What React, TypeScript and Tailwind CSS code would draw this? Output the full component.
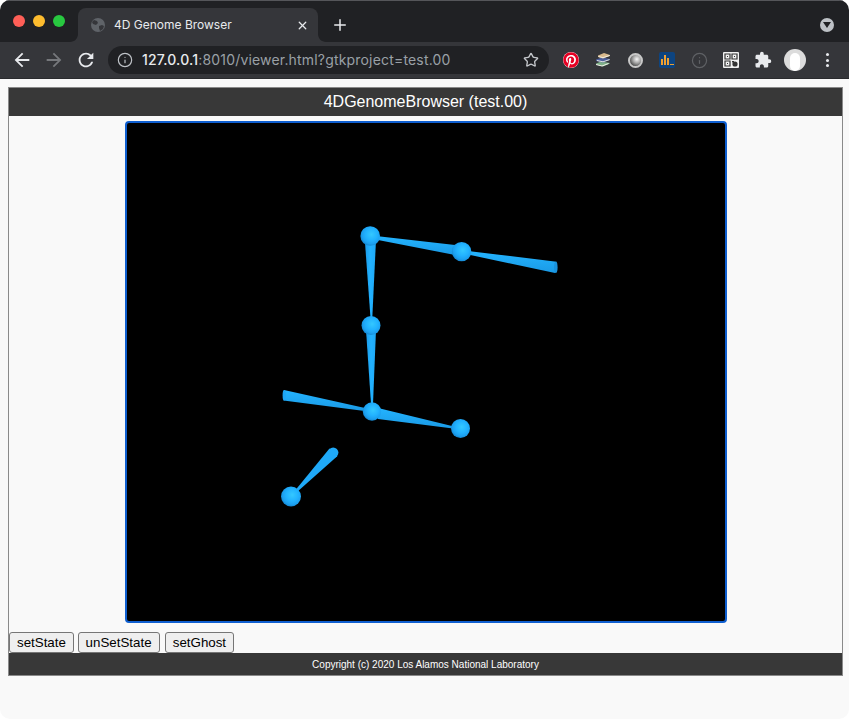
import React from 'react';
import { FaPinterest } from 'react-icons/fa';
import { MdArrowBack, MdArrowForward, MdRefresh, MdExtension } from 'react-icons/md';
import { Info, Star, X, Plus } from 'lucide-react';

const uiFont = "font-['Inter','Liberation_Sans',sans-serif]";

const Ball = ({ x, y, r }: { x: number; y: number; r: number }) => (
  <circle cx={x} cy={y} r={r} fill="url(#ball)" />
);

// the stick figure from the WebGL canvas, in page coordinates
const GenomeScene = () => (
  <svg viewBox="127 123 598 498" className="block w-full h-full">
    <defs>
      <radialGradient id="ball" cx="0.56" cy="0.42" r="0.6">
        <stop offset="0" stopColor="#34c8ff" />
        <stop offset="0.5" stopColor="#22b2ff" />
        <stop offset="0.8" stopColor="#1ca0f0" />
        <stop offset="1" stopColor="#1484cc" />
      </radialGradient>
      <linearGradient id="coneV" x1="0" y1="0" x2="1" y2="0">
        <stop offset="0" stopColor="#1a9ae8" />
        <stop offset="0.5" stopColor="#22b2ff" />
        <stop offset="1" stopColor="#1ea8f6" />
      </linearGradient>
      <linearGradient id="coneH" x1="0" y1="0" x2="0" y2="1">
        <stop offset="0" stopColor="#24b4ff" />
        <stop offset="1" stopColor="#1a9ae6" />
      </linearGradient>
    </defs>
    <polygon points="364.800,240 376,240 372.300,318 370.500,318" fill="url(#coneV)" />
    <polygon points="376,236 378,240 455,255 455,245" fill="url(#coneH)" />
    <polygon points="468,251 468,254.500 555,273 556.700,261.700" fill="url(#coneH)" />
    <ellipse cx="555.800" cy="267.400" rx="1.800" ry="5.700" fill="#1a92dc" />
    <polygon points="366,330 376,330 373,404 371,404" fill="url(#coneV)" />
    <polygon points="284,390 365,408 364.500,411 283.500,400.500" fill="url(#coneH)" />
    <ellipse cx="284.200" cy="395.300" rx="1.600" ry="5.300" fill="#1ea6f5" />
    <polygon points="378,408 454,426.500 453,428.500 378,419" fill="url(#coneH)" />
    <polygon points="295.500,490 297,492 337.500,456 329.500,448.500" fill="#1fa9f8" />
    <circle cx="333.200" cy="452.600" r="5.200" fill="#1fa9f8" />
    <Ball x={370.2} y={236} r={9.8} />
    <Ball x={461.6} y={251.6} r={9.7} />
    <Ball x={371} y={325.5} r={9.5} />
    <Ball x={372} y={411.5} r={9.2} />
    <Ball x={460.5} y={428.5} r={9.5} />
    <Ball x={291} y={496.5} r={10} />
  </svg>
);

const ExtIcon = ({ children }: { children: React.ReactNode }) => (
  <div className="w-8 h-7 flex items-center justify-center shrink-0">{children}</div>
);

const BrowserChrome = () => (
  <div className={uiFont}>
    {/* tab strip */}
    <div className="h-[42px] bg-[#202124] border-t border-[#55565a] flex relative">
      <div className="flex items-center gap-[8px] pl-[13px] w-[78px] pb-[2px] shrink-0">
        <span className="w-3 h-3 rounded-full bg-[#ff5f57]" />
        <span className="w-3 h-3 rounded-full bg-[#febc2e]" />
        <span className="w-3 h-3 rounded-full bg-[#28c840]" />
      </div>
      <div className="mt-[7px] w-[240px] h-[34px] bg-[#35363a] rounded-t-[8px] flex items-center pl-[12px] pr-[9px] relative">
        <svg viewBox="0 0 16 16" className="w-4 h-4 shrink-0">
          <circle cx="8" cy="8" r="7" fill="#5f6368" />
          <path d="M4 3l3 1 1 2-2 2-3-1-1-2zM9 9l3-1 2 1-1 3-3 2-1-3z" fill="#35363a" />
        </svg>
        <span className="ml-[8px] text-[12px] text-[#e8eaed] leading-none whitespace-nowrap">4D Genome Browser</span>
        <X size={13} strokeWidth={2.4} className="ml-auto text-[#e8eaed]" />
        <svg viewBox="0 0 8 8" className="absolute -left-2 bottom-0 w-2 h-2">
          <path d="M8 0v8H0c4.400 0 8-3.600 8-8z" fill="#35363a" />
        </svg>
        <svg viewBox="0 0 8 8" className="absolute -right-2 bottom-0 w-2 h-2">
          <path d="M0 0v8h8C3.600 8 0 4.400 0 0z" fill="#35363a" />
        </svg>
      </div>
      <div className="ml-[13px] mt-[7px] h-[34px] flex items-center">
        <Plus size={18} strokeWidth={2} className="text-[#e8eaed]" />
      </div>
      <div className="ml-auto mr-[15px] mt-[7px] h-[34px] flex items-center">
        <div className="w-[14px] h-[14px] rounded-full bg-[#bdc1c6] flex items-center justify-center">
          <svg viewBox="0 0 8 6" className="w-2 h-[6px]">
            <path d="M0 0h8L4 6z" fill="#202124" />
          </svg>
        </div>
      </div>
    </div>
    {/* toolbar */}
    <div className="h-[37px] bg-[#35363a] border-b border-[#2a2b2e] flex items-center pl-[6px]">
      <ExtIcon><MdArrowBack size={22} className="text-[#e8eaed]" /></ExtIcon>
      <ExtIcon><MdArrowForward size={22} className="text-[#76787c]" /></ExtIcon>
      <ExtIcon><MdRefresh size={22} className="text-[#e8eaed]" /></ExtIcon>
      <div className="ml-[6px] w-[441px] h-[28px] rounded-full bg-[#202124] flex items-center pl-[9px] pr-[10px] shrink-0">
        <Info size={16} strokeWidth={1.8} className="text-[#bdc1c6] shrink-0" />
        <span className="ml-[9px] text-[14px] leading-none text-[#9aa0a6] whitespace-nowrap tracking-[0.18px]">
          <span className="text-[#e8eaed] font-medium">127.0.0.1</span>:8010/viewer.html?gtkproject=test.00
        </span>
        <Star size={16} strokeWidth={2} className="ml-auto text-[#c4c7cb] shrink-0" />
      </div>
      <div className="ml-[6px] flex items-center">
        <ExtIcon>
          <span className="w-4 h-4 rounded-full bg-white flex items-center justify-center">
            <FaPinterest size={16} className="text-[#e60023]" />
          </span>
        </ExtIcon>
        <ExtIcon>
          <svg viewBox="0 0 16 16" className="w-4 h-4">
            <path d="M1 11.500l5-2 9 1.500-1 1-6 2.500-6-1.500z" fill="#7fb089" />
            <path d="M1 12.500l6 1.500 6.500-2.500" fill="none" stroke="#f2f2ea" strokeWidth="1" />
            <path d="M1 7.500l6-2 8 1.500v1l-7 2.500-7-1.500z" fill="#4c5f9c" />
            <path d="M2 8.500l6 1.300 6.500-2.200" fill="none" stroke="#f2f2ea" strokeWidth="0.900" />
            <path d="M3 3.500l6-2.500 6 2v1L8 6.500l-5-1.500z" fill="#d8b98c" />
            <path d="M3.500 4.500l4.500 1.200 6.500-2.200" fill="none" stroke="#f2f2ea" strokeWidth="0.900" />
          </svg>
        </ExtIcon>
        <ExtIcon>
          <span className="w-[15px] h-[15px] rounded-full bg-[radial-gradient(circle_at_62%_38%,#f8f8f8_0%,#a5a5a5_40%,#4e4e4e_75%)] border-2 border-[#c8c8c8]" />
        </ExtIcon>
        <ExtIcon>
          <div className="w-4 h-4 rounded-[2px] bg-[#0d4480] flex items-end justify-center gap-[1px] pb-[3px]">
            <span className="w-[2px] h-[6px] bg-[#f0a030]" />
            <span className="w-[2px] h-[10px] bg-[#f0a030]" />
            <span className="w-[2px] h-[7px] bg-[#f0a030]" />
            <span className="w-[4px] h-[1.500px] bg-[#f0a030]" />
          </div>
        </ExtIcon>
        <ExtIcon><Info size={17} strokeWidth={1.7} className="text-[#5f6165]" /></ExtIcon>
        <ExtIcon>
          <svg viewBox="0 0 16 16" className="w-4 h-4">
            <rect width="16" height="16" rx="1" fill="#f1f1f1" />
            <path d="M2 2h5v5H2zM9 2h5v5H9zM2 9h5v5H2z" fill="none" stroke="#333" strokeWidth="1.200" />
            <path d="M4 4h1v1H4zM11 4h1v1h-1zM4 11h1v1H4z" fill="#333" />
            <circle cx="12" cy="12" r="2.600" fill="#333" />
            <path d="M9 9h2v1.500H9z" fill="#333" />
          </svg>
        </ExtIcon>
        <ExtIcon><MdExtension size={18} className="text-[#e8eaed]" /></ExtIcon>
        <ExtIcon>
          <div className="w-[22px] h-[22px] rounded-full bg-[#dcdcdc] flex items-center justify-center overflow-hidden">
            <span className="w-[10px] h-[18px] mt-[3px] rounded-full bg-white" />
          </div>
        </ExtIcon>
        <ExtIcon>
          <div className="flex flex-col gap-[2.500px]">
            <span className="w-[3px] h-[3px] rounded-full bg-[#e8eaed]" />
            <span className="w-[3px] h-[3px] rounded-full bg-[#e8eaed]" />
            <span className="w-[3px] h-[3px] rounded-full bg-[#e8eaed]" />
          </div>
        </ExtIcon>
      </div>
    </div>
  </div>
);

const ActionButton = ({ label, className }: { label: string; className?: string }) => (
  <button className={`h-[21px] px-[7px] bg-[#efefef] border border-[#767676] rounded-[3px] text-[13.33px] leading-none text-black ${className ?? ''}`}>
    {label}
  </button>
);

const App: React.FC = () => {
  return (
    <div className="w-[849px] h-[719px] bg-white overflow-hidden">
      <div className="h-full flex flex-col rounded-[10px] overflow-hidden bg-[#f9f9f9]">
        <BrowserChrome />
        <main className="flex-1 pt-2 pl-2 font-['Liberation_Sans',Arial,sans-serif]">
          <div className="w-[835px] border border-[#8a8a8a]">
            <header className="h-[28px] bg-[#383838] text-white text-[16px] flex items-center justify-center">
              4DGenomeBrowser (test.00)
            </header>
            <div className="w-[602px] h-[502px] mx-auto mt-[5px] bg-black border-2 border-[#0f5fd0] rounded-[4px] overflow-hidden">
              <GenomeScene />
            </div>
            <div className="flex gap-[3.700px] mt-[9px]">
              <ActionButton label="setState" />
              <ActionButton label="unSetState" />
              <ActionButton label="setGhost" className="ml-[1.500px]" />
            </div>
            <footer className="h-[22px] bg-[#383838] text-white text-[10px] flex items-center justify-center">
              Copyright (c) 2020 Los Alamos National Laboratory
            </footer>
          </div>
        </main>
      </div>
    </div>
  );
};

export default App;
